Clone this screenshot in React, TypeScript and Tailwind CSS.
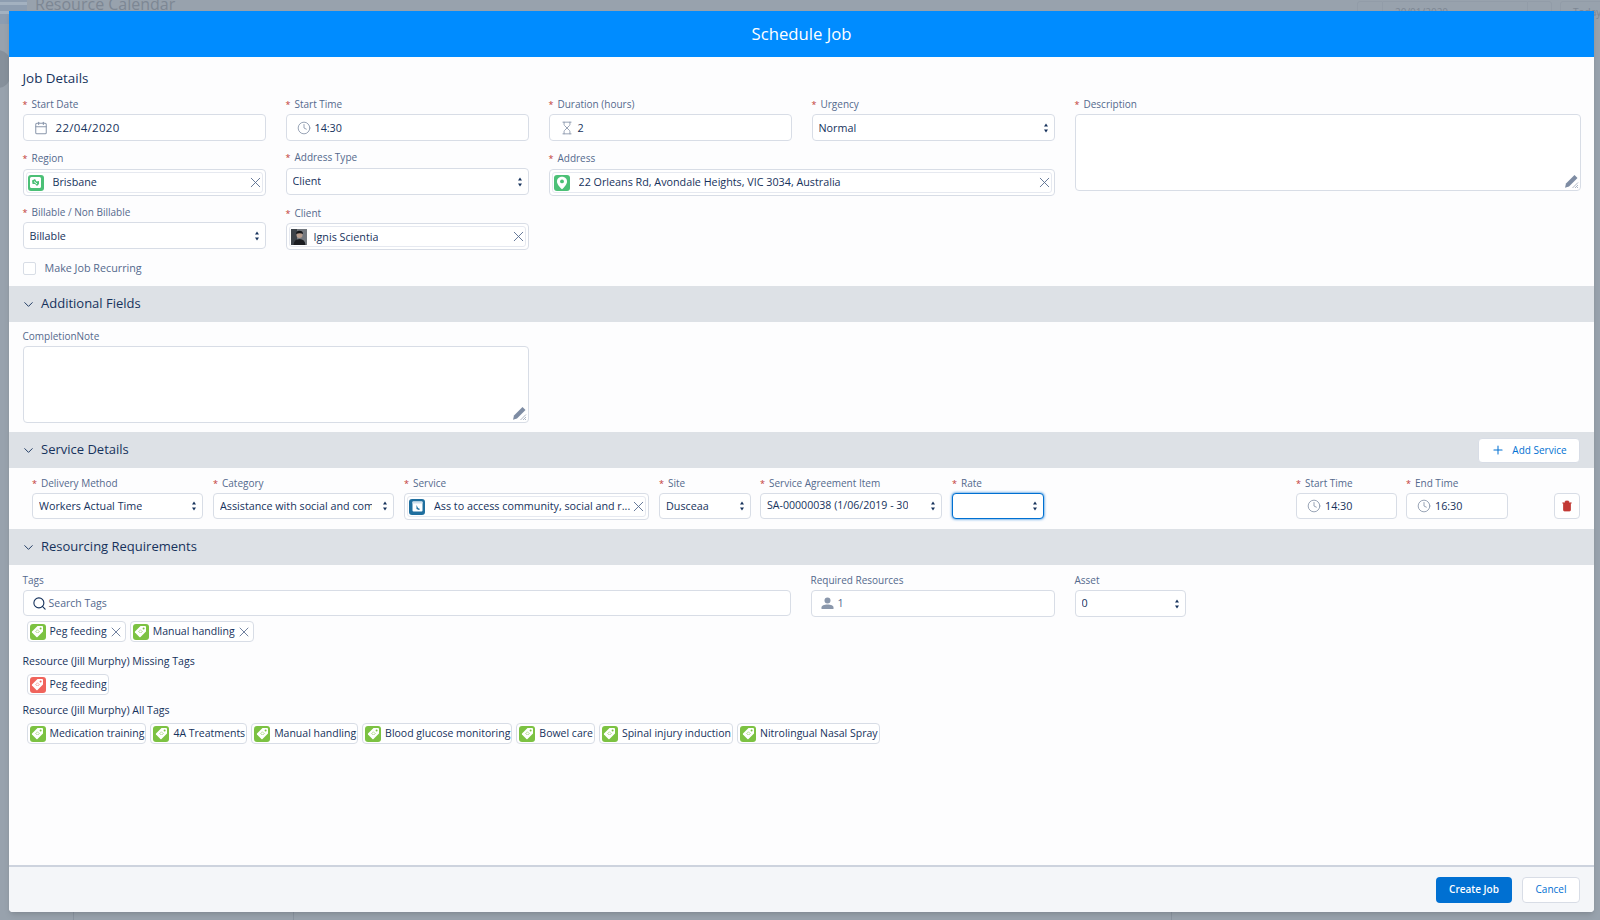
import React from 'react';
import { Calendar, Clock, Hourglass, X, ChevronDown, Plus, Search, Trash2 } from 'lucide-react';

const Label = ({ text, required = true }: { text: string; required?: boolean }) => (
  <div className="h-[14px] mb-[3px] text-[10px] leading-[14px] text-[#54698d] whitespace-nowrap">
    {required && <span className="text-[#c23934] mr-[4px] text-[9px]">*</span>}
    {text}
  </div>
);

const box = 'bg-white border border-[#d8dde6] rounded-[4px] flex items-center text-[10.75px] text-[#16325c]';

const Arrows = () => (
  <svg width="6" height="12" viewBox="0 0 6 12" className="ml-auto shrink-0 text-[#16325c]">
    <path d="M3 1.5 L5 4.5 H1 Z M3 10.5 L5 7.5 H1 Z" fill="currentColor" />
  </svg>
);

const Select = ({ value, compact, extra = '' }: { value: string; compact?: boolean; extra?: string }) => (
  <div className={`${box} ${compact ? 'h-[26px] text-[10.4px]' : 'h-[27px]'} pl-[6px] pr-[5px]`}>
    <span className={`overflow-hidden whitespace-nowrap mr-[10px] min-w-0 ${extra}`}>{value}</span>
    <Arrows />
  </div>
);

const IconInput = ({ icon: Icon, value, compact, extra = '' }: { icon: React.ElementType; value: string; compact?: boolean; extra?: string }) => (
  <div className={`${box} ${compact ? 'h-[26px] text-[10.4px]' : 'h-[27px]'} pl-[10px]`}>
    <Icon className="w-[14px] h-[14px] text-[#8a97ab] mr-[4px] shrink-0" strokeWidth={1.5} />
    <span className={extra}>{value}</span>
  </div>
);

const Lookup = ({ icon, value, gap = 'ml-[9px]' }: { icon: React.ReactNode; value: string; gap?: string }) => (
  <div className="h-[27px] bg-white border border-[#d8dde6] rounded-[4px] p-[2px]">
    <div className="h-full border border-[#e6e9f0] rounded-[3px] flex items-center pl-[1px] text-[10.75px] text-[#16325c]">
      {icon}
      <span className={`${gap} overflow-hidden whitespace-nowrap`}>{value}</span>
      <X className="ml-auto -mr-[2px] w-[17px] h-[17px] text-[#54698d] shrink-0" strokeWidth={1.25} />
    </div>
  </div>
);

const IconTile = ({ bg, children }: { bg: string; children: React.ReactNode }) => (
  <div className={`w-[16px] h-[16px] rounded-[3px] flex items-center justify-center shrink-0 ${bg}`}>{children}</div>
);

const TagGlyph = ({ hole }: { hole: string }) => (
  <svg width="13" height="13" viewBox="0 0 13 13">
    <path d="M12 1.5 V6.5 L6.5 12 Q6 12.4 5.4 12 L1 7.6 Q0.6 7 1 6.5 L6.5 1 H11 Q12 1 12 1.5 Z" fill="white" />
    <circle cx="9.6" cy="3.4" r="1" fill={hole} />
    <path d="M6.5 4.8 L8.2 6.5 L6.5 8.2 L4.8 6.5 Z" fill="none" stroke={hole} strokeWidth="0.9" strokeDasharray="1 0.7" />
  </svg>
);

const RegionGlyph = () => (
  <svg width="13" height="13" viewBox="0 0 13 13">
    <rect x="1" y="1" width="11" height="11" rx="1.5" fill="white" />
    <path d="M3 4.5 L6 3 L7.5 5.5 L10 5 L10 8 L8 10 L6 8 L3.5 8 Z" fill="#4bc076" />
    <path d="M5 5.5 L8 8" stroke="white" strokeWidth="1" />
  </svg>
);

const PinGlyph = () => (
  <svg width="12" height="14" viewBox="0 0 12 14">
    <path d="M6 0.8 C2.9 0.8 1 3 1 5.4 C1 8.5 4.5 11.8 6 13.2 C7.5 11.8 11 8.5 11 5.4 C11 3 9.1 0.8 6 0.8 Z" fill="white" />
    <circle cx="6" cy="5.4" r="1.9" fill="#4bc076" />
  </svg>
);

const ServiceGlyph = () => (
  <svg width="13" height="13" viewBox="0 0 13 13">
    <rect x="1.5" y="1.5" width="10" height="10" rx="1" fill="white" />
    <rect x="1.5" y="1.5" width="10" height="2" fill="#cfe0ec" />
    <path d="M5.5 5 L7 8 L9 9 L8 10 L5.5 9 Z" fill="#1f6f9f" />
  </svg>
);

const Avatar = () => (
  <svg width="16" height="16" viewBox="0 0 16 16" className="shrink-0">
    <rect width="16" height="16" fill="#74797f" />
    <path d="M0 0 H6 V16 H0 Z" fill="#3c4249" />
    <circle cx="8.5" cy="6" r="3" fill="#b79c8c" />
    <path d="M5 5 Q5.5 1.5 8.5 1.8 Q12 1.8 12 5 Q9 3.5 5 5 Z" fill="#15171a" />
    <path d="M2.5 16 Q3 10 8.5 10 Q14 10 14.5 16 Z" fill="#1b1d21" />
  </svg>
);

const PersonGlyph = () => (
  <svg width="15" height="15" viewBox="0 0 15 15" className="mr-[3px] shrink-0">
    <circle cx="7.5" cy="4.4" r="3" fill="#8a97ab" />
    <path d="M1.5 13 V11.6 C1.5 9.8 4 8.6 7.5 8.6 C11 8.6 13.5 9.8 13.5 11.6 V13 Z" fill="#8a97ab" />
  </svg>
);

const Grip = () => (
  <svg width="15" height="15" viewBox="0 0 15 15" className="absolute right-[1px] bottom-[1px]">
    <path d="M10.5 1 L13.5 4 L5 12.5 L1 13.8 L2 9.5 Z" fill="#7e8ca3" />
    <path d="M14 8.5 L8.5 14 M14 11 L11 14 M14 13 L13 14" stroke="#8a97ab" strokeWidth="0.7" />
  </svg>
);

const Section = ({ title, action }: { title: string; action?: React.ReactNode }) => (
  <div className="h-[36px] bg-[#dde1e6] flex items-center pl-[12px] pr-[14px] text-[13px] text-[#16325c]">
    <ChevronDown className="w-[15px] h-[15px] mr-[5px]" strokeWidth={1.5} />
    {title}
    {action}
  </div>
);

const Chip = ({ text, removable, red }: { text: string; removable?: boolean; red?: boolean }) => (
  <div className="h-[21px] bg-white border border-[#d8dde6] rounded-[4px] flex items-center pl-[2px] pr-[1px] text-[10.5px] text-[#16325c] whitespace-nowrap">
    <IconTile bg={red ? 'bg-[#f0645c]' : 'bg-[#7cc242]'}>
      <TagGlyph hole={red ? '#f0645c' : '#7cc242'} />
    </IconTile>
    <span className="ml-[4px]">{text}</span>
    {removable && <X className="ml-[1px] w-[16px] h-[16px] text-[#54698d]" strokeWidth={1.25} />}
  </div>
);

export default function App() {
  return (
    <div className="relative h-[920px] overflow-hidden bg-[#98a2ad] pt-[11px] pl-[9px] pr-[6px] pb-[8px] font-['Open_Sans',sans-serif]">
      {/* page behind the dialog */}
      <div className="absolute left-0 top-0 w-[27px] h-[24px] bg-[#8d9db0]">
        <div className="mt-[2px] h-[3px] bg-[#a3b1c0]" />
        <div className="mt-[6px] w-[20px] h-[3px] bg-[#a3b1c0]" />
      </div>
      <div className="absolute left-[35px] top-[-8px] text-[16px] text-[#7d8794]">Resource Calendar</div>
      <div className="absolute left-[-14px] top-[50px] w-[24px] h-[38px] rounded-full bg-[#86909b]" />
      <div className="absolute left-[1357px] top-[1px] w-[26px] h-[14px] border border-[#929ca8] rounded-l-[3px]" />
      <div className="absolute left-[1383px] top-[1px] w-[144px] h-[14px] border-y border-[#929ca8] pl-[12px] text-[10px] leading-[20px] text-[#7d8794]">
        20/01/2020
      </div>
      <div className="absolute left-[1527px] top-[1px] w-[25px] h-[14px] border border-[#929ca8] rounded-r-[3px]" />
      <div className="absolute left-[1560px] top-[1px] w-[50px] h-[14px] border border-[#929ca8] rounded-[3px] pl-[12px] text-[10px] leading-[20px] text-[#7d8794]">
        Today
      </div>
      <div className="absolute left-[73px] top-[912px] h-[8px] border-l border-[#8a94a0]" />
      <div className="absolute left-[293px] top-[912px] h-[8px] border-l border-[#8a94a0]" />
      <div className="absolute left-[1171px] top-[912px] h-[8px] border-l border-[#8a94a0]" />

      <div className="relative flex flex-col h-full rounded-b-[4px] overflow-hidden bg-white shadow-md">
        <div className="h-[46px] shrink-0 bg-[#008cff] flex items-center justify-center text-[16.7px] text-white">
          Schedule Job
        </div>

        <div className="flex-1 bg-[#fdfdfe]">
          {/* Job details */}
          <div className="pt-[14px] px-[13.5px] h-[229px]">
            <div className="h-[14px] text-[13.4px] leading-[14px] text-[#16325c] mb-[12px]">Job Details</div>
            <div className="grid grid-cols-[243px_243px_243px_243px_1fr] gap-x-[20px]">
              <div>
                <Label text="Start Date" />
                <div className={`${box} h-[27px] pl-[10px]`}>
                  <Calendar className="w-[14px] h-[14px] text-[#8a97ab] mr-[8px]" strokeWidth={1.75} />
                  <span className="text-[11.5px] tracking-[0.3px]">22/04/2020</span>
                </div>
                <div className="mt-[10px]" />
                <Label text="Region" />
                <div className="mt-[4px]">
                  <Lookup
                    value="Brisbane"
                    icon={
                      <IconTile bg="bg-[#4bc076]">
                        <RegionGlyph />
                      </IconTile>
                    }
                  />
                </div>
                <div className="mt-[9px]" />
                <Label text="Billable / Non Billable" />
                <Select value="Billable" extra="pt-[2px]" />
              </div>
              <div>
                <Label text="Start Time" />
                <IconInput icon={Clock} value="14:30" extra="pt-[2px]" />
                <div className="mt-[9px]" />
                <Label text="Address Type" />
                <div className="mt-[4px]">
                  <Select value="Client" />
                </div>
                <div className="mt-[11px]" />
                <Label text="Client" />
                <Lookup value="Ignis Scientia" gap="ml-[7px] pt-[2px]" icon={<Avatar />} />
              </div>
              <div className="col-span-2">
                <div className="grid grid-cols-2 gap-x-[20px]">
                  <div>
                    <Label text="Duration (hours)" />
                    <IconInput icon={Hourglass} value="2" extra="pt-[2px]" />
                  </div>
                  <div>
                    <Label text="Urgency" />
                    <Select value="Normal" extra="pt-[2px]" />
                  </div>
                </div>
                <div className="mt-[10px]" />
                <Label text="Address" />
                <div className="mt-[4px]">
                  <Lookup
                    value="22 Orleans Rd, Avondale Heights, VIC 3034, Australia"
                    icon={
                      <IconTile bg="bg-[#4bc076]">
                        <PinGlyph />
                      </IconTile>
                    }
                  />
                </div>
              </div>
              <div>
                <Label text="Description" />
                <div className="relative h-[77px] bg-white border border-[#d8dde6] rounded-[4px]">
                  <Grip />
                </div>
              </div>
            </div>
            <label className="mt-[10px] flex items-center text-[10.75px] text-[#54698d]">
              <span className="w-[13px] h-[13px] bg-white border border-[#d8dde6] rounded-[2px] mr-[9px]" />
              Make Job Recurring
            </label>
          </div>

          <Section title="Additional Fields" />
          <div className="pt-[7px] px-[13.5px] h-[110px]">
            <div className="h-[14px] mb-[3px] text-[10px] leading-[14px] text-[#54698d]">CompletionNote</div>
            <div className="relative w-[506px] h-[77px] bg-white border border-[#d8dde6] rounded-[4px]">
              <Grip />
            </div>
          </div>

          <Section
            title="Service Details"
            action={
              <button className="ml-auto w-[102px] h-[25px] bg-white border border-[#d8dde6] rounded-[4px] flex items-center justify-center text-[10px] text-[#0070d2]">
                <Plus className="w-[14px] h-[14px] mr-[7px]" strokeWidth={1.75} />
                Add Service
              </button>
            }
          />
          <div className="h-[61px] pl-[23px] pr-[14px] pt-[8px] flex">
            <div className="w-[171px] mr-[10px]">
              <Label text="Delivery Method" />
              <Select compact value="Workers Actual Time" />
            </div>
            <div className="w-[181px] mr-[10px]">
              <Label text="Category" />
              <Select compact value="Assistance with social and community" />
            </div>
            <div className="w-[245px] mr-[10px]">
              <Label text="Service" />
              <Lookup
                value="Ass to access community, social and r..."
                icon={
                  <IconTile bg="bg-[#1f6f9f]">
                    <ServiceGlyph />
                  </IconTile>
                }
              />
            </div>
            <div className="w-[92px] mr-[9px]">
              <Label text="Site" />
              <Select compact value="Dusceaa" />
            </div>
            <div className="w-[182px] mr-[10px]">
              <Label text="Service Agreement Item" />
              <Select compact value="SA-00000038 (1/06/2019 - 30" extra="text-[10.6px]" />
            </div>
            <div className="w-[92px]">
              <Label text="Rate" />
              <div className="h-[26px] bg-white border border-[#0070d2] rounded-[4px] shadow-[0_0_3px_#0070d2] flex items-center px-[5px]">
                <Arrows />
              </div>
            </div>
            <div className="w-[101px] ml-auto mr-[9px]">
              <Label text="Start Time" />
              <IconInput compact icon={Clock} value="14:30" />
            </div>
            <div className="w-[102px] mr-[46px]">
              <Label text="End Time" />
              <IconInput compact icon={Clock} value="16:30" />
            </div>
            <div className="mt-[17px] w-[26px] h-[26px] bg-white border border-[#d8dde6] rounded-[4px] flex items-center justify-center">
              <Trash2 className="w-[12px] h-[12px] text-[#c23934]" fill="#c23934" strokeWidth={1.5} />
            </div>
          </div>

          <Section title="Resourcing Requirements" />
          <div className="pt-[8px] px-[13.5px]">
            <div className="grid grid-cols-[768px_244px_111px] gap-x-[20px]">
              <div>
                <div className="mb-[3px]">
                  <Label text="Tags" required={false} />
                </div>
                <div className={`${box} h-[26px] pl-[8px]`}>
                  <Search className="w-[15px] h-[15px] text-[#16325c] mr-[2px]" strokeWidth={1.75} />
                  <span className="text-[10.5px] text-[#54698d] pt-[1px]">Search Tags</span>
                </div>
              </div>
              <div>
                <Label text="Required Resources" required={false} />
                <div className={`${box} h-[27px] pl-[8px]`}>
                  <PersonGlyph />
                  <span className="text-[#54698d]">1</span>
                </div>
              </div>
              <div>
                <Label text="Asset" required={false} />
                <Select value="0" />
              </div>
            </div>
            <div className="flex gap-[4px] mt-[4px] pl-[4px]">
              <Chip text="Peg feeding" removable />
              <Chip text="Manual handling" removable />
            </div>
            <div className="mt-[12px] h-[14px] text-[10.6px] leading-[14px] text-[#16325c]">Resource (Jill Murphy) Missing Tags</div>
            <div className="flex mt-[6px] pl-[4px]">
              <Chip text="Peg feeding" red />
            </div>
            <div className="mt-[8px] h-[14px] text-[10.6px] leading-[14px] text-[#16325c]">Resource (Jill Murphy) All Tags</div>
            <div className="flex gap-[4px] mt-[6px] pl-[4px]">
              <Chip text="Medication training" />
              <Chip text="4A Treatments" />
              <Chip text="Manual handling" />
              <Chip text="Blood glucose monitoring" />
              <Chip text="Bowel care" />
              <Chip text="Spinal injury induction" />
              <Chip text="Nitrolingual Nasal Spray" />
            </div>
          </div>
        </div>

        <div className="h-[47px] shrink-0 bg-[#f4f6f9] border-t-2 border-[#cdd3de] flex items-center justify-end pr-[14px] gap-[10px] text-[10px]">
          <button className="w-[76px] h-[26px] rounded-[4px] bg-[#0070d2] text-white font-semibold">Create Job</button>
          <button className="w-[58px] h-[26px] rounded-[4px] bg-white border border-[#d8dde6] text-[#0070d2]">Cancel</button>
        </div>
      </div>
    </div>
  );
}
